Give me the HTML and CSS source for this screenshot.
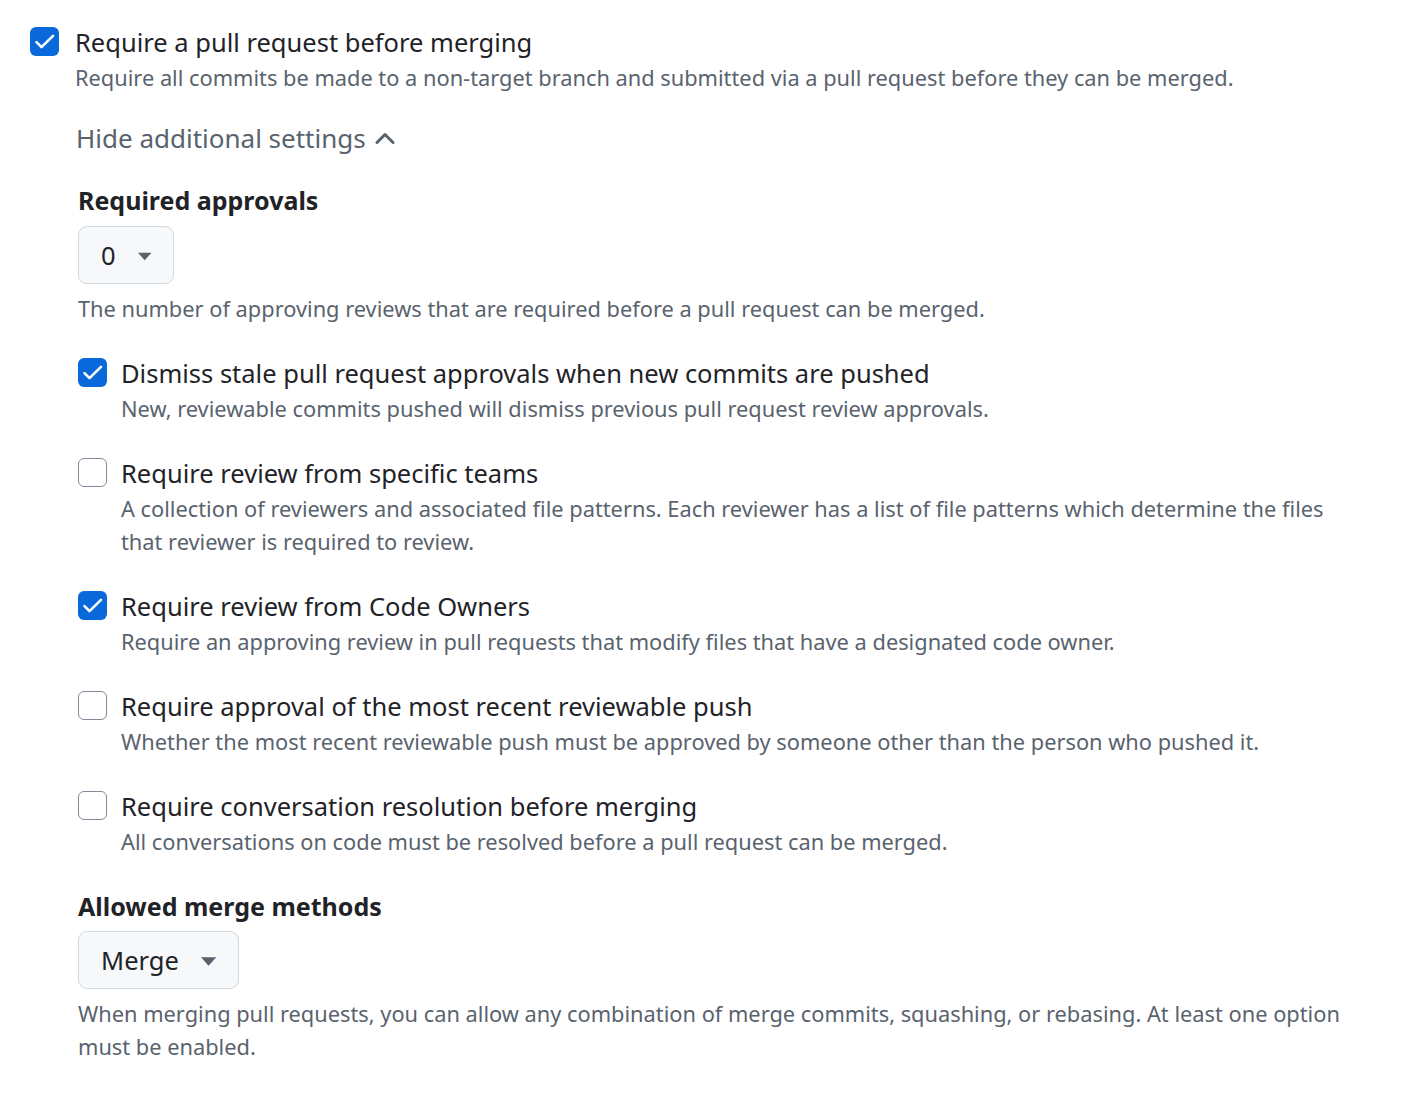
FILE: index.html
```html
<!DOCTYPE html>
<html lang="en">
<head>
<meta charset="utf-8">
<title>Branch protection</title>
<link rel="stylesheet" href="styles.css">
</head>
<body>
<div class="page">
  <div class="option top">
    <span class="cb checked"><svg viewBox="0 0 29 29" width="29" height="29"><path d="M6.5 15.2l5 5L23 8.8" fill="none" stroke="#fff" stroke-width="2.6" stroke-linecap="round" stroke-linejoin="round"/></svg></span>
    <div class="text">
      <div class="label">Require a pull request before merging</div>
      <div class="desc">Require all commits be made to a non-target branch and submitted via a pull request before they can be merged.</div>
    </div>
  </div>

  <div class="sub">
    <div class="toggle">Hide additional settings
      <svg class="chev" viewBox="0 0 20 12" width="20" height="12"><path d="M2 10.5L10 2.5l8 8" fill="none" stroke="#59636e" stroke-width="3" stroke-linecap="round" stroke-linejoin="round"/></svg>
    </div>

    <div class="inner">
      <div class="heading">Required approvals</div>
      <div class="select small"><span>0</span><svg class="caret" viewBox="0 0 16 9" width="16" height="9"><path d="M0 0h16L8 9z" fill="#59636e"/></svg></div>
      <div class="desc help">The number of approving reviews that are required before a pull request can be merged.</div>

      <div class="option item">
        <span class="cb checked"><svg viewBox="0 0 29 29" width="29" height="29"><path d="M6.5 15.2l5 5L23 8.8" fill="none" stroke="#fff" stroke-width="2.6" stroke-linecap="round" stroke-linejoin="round"/></svg></span>
        <div class="text">
          <div class="label">Dismiss stale pull request approvals when new commits are pushed</div>
          <div class="desc">New, reviewable commits pushed will dismiss previous pull request review approvals.</div>
        </div>
      </div>

      <div class="option item">
        <span class="cb"></span>
        <div class="text">
          <div class="label">Require review from specific teams</div>
          <div class="desc">A collection of reviewers and associated file patterns. Each reviewer has a list of file patterns which determine the files that reviewer is required to review.</div>
        </div>
      </div>

      <div class="option item">
        <span class="cb checked"><svg viewBox="0 0 29 29" width="29" height="29"><path d="M6.5 15.2l5 5L23 8.8" fill="none" stroke="#fff" stroke-width="2.6" stroke-linecap="round" stroke-linejoin="round"/></svg></span>
        <div class="text">
          <div class="label">Require review from Code Owners</div>
          <div class="desc">Require an approving review in pull requests that modify files that have a designated code owner.</div>
        </div>
      </div>

      <div class="option item">
        <span class="cb"></span>
        <div class="text">
          <div class="label">Require approval of the most recent reviewable push</div>
          <div class="desc">Whether the most recent reviewable push must be approved by someone other than the person who pushed it.</div>
        </div>
      </div>

      <div class="option item">
        <span class="cb"></span>
        <div class="text">
          <div class="label">Require conversation resolution before merging</div>
          <div class="desc">All conversations on code must be resolved before a pull request can be merged.</div>
        </div>
      </div>

      <div class="heading later">Allowed merge methods</div>
      <div class="select wide"><span>Merge</span><svg class="caret" viewBox="0 0 16 9" width="16" height="9"><path d="M0 0h16L8 9z" fill="#59636e"/></svg></div>
      <div class="desc help last">When merging pull requests, you can allow any combination of merge commits, squashing, or rebasing. At least one option must be enabled.</div>
    </div>
  </div>
</div>
</body>
</html>
```

FILE: styles.css
```css
html, body {
  margin: 0;
  padding: 0;
  background: #ffffff;
}

body {
  font-family: "Noto Sans", "Open Sans", sans-serif;
  color: #1f2328;
}

.page {
  padding: 23px 74px 40px 30px;
}

.option {
  display: flex;
  align-items: flex-start;
}

.cb {
  flex: 0 0 auto;
  box-sizing: border-box;
  width: 29px;
  height: 29px;
  border-radius: 6px;
  border: 1.5px solid #818b98;
  background: #ffffff;
  margin-top: 4px;
  display: flex;
  align-items: center;
  justify-content: center;
}

.cb.checked {
  background: #0969da;
  border: none;
}

.top .cb {
  margin-right: 16px;
}

.item .cb {
  margin-right: 14px;
}

.label {
  font-size: 25.5px;
  line-height: 38px;
  color: #1f2328;
}

.desc {
  font-size: 21.8px;
  line-height: 33px;
  color: #59636e;
}

.sub {
  padding-left: 46px;
}

.toggle {
  margin-top: 26px;
  font-size: 26px;
  line-height: 36px;
  color: #59636e;
  display: flex;
  align-items: center;
}

.chev {
  margin-left: 9px;
  margin-top: -1px;
}

.inner {
  padding-left: 2px;
}

.heading {
  margin-top: 26px;
  font-size: 25px;
  line-height: 36px;
  font-weight: 700;
  color: #1f2328;
}

.heading.later {
  margin-top: 30px;
}

.select {
  margin-top: 8px;
  box-sizing: border-box;
  height: 58px;
  display: flex;
  align-items: center;
  padding: 0 22px 0 22px;
  background: #f6f8fa;
  border: 1px solid #d1d9e0;
  border-radius: 9px;
  font-size: 25.5px;
  color: #1f2328;
}

.select .caret {
  margin-left: 22px;
  margin-top: 2px;
}

.select.small {
  width: 96px;
}

.select.wide {
  width: 161px;
  margin-top: 7px;
}

.help {
  margin-top: 8px;
}

.help.last {
  margin-top: 8px;
}

.item {
  margin-top: 29px;
}
```
